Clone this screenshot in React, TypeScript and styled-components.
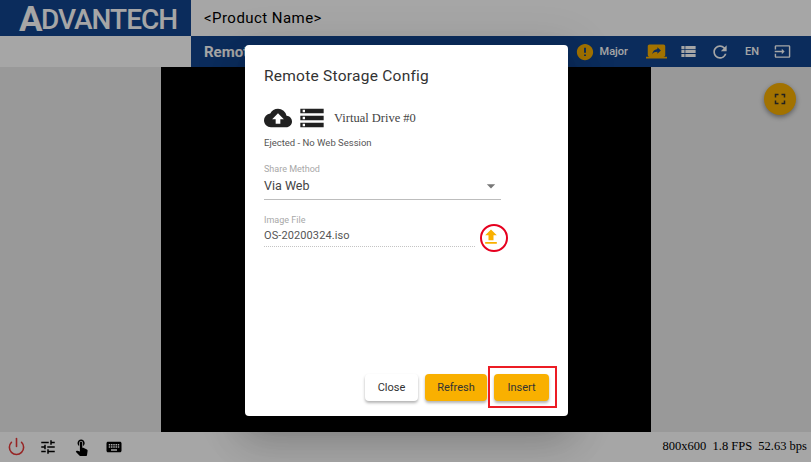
import React from "react";
import styled, { createGlobalStyle } from "styled-components";
import {
  MdCloudUpload, MdStorage, MdArrowDropDown, MdFileUpload, MdTune, MdTouchApp, MdKeyboard,
  MdScreenShare, MdViewList, MdRefresh, MdInput, MdFullscreen,
} from "react-icons/md";
import { FiPower } from "react-icons/fi";
import { IoMdAlert } from "react-icons/io";

const Global = createGlobalStyle`
  html, body { margin: 0; padding: 0; overflow: hidden; }
  body { font-family: Roboto, "Liberation Sans", sans-serif; }
`;

const Page = styled.div`
  position: relative;
  width: 811px;
  height: 462px;
  overflow: hidden;
  display: grid;
  grid-template-rows: 36px 31px 1fr 30px;
  grid-template-columns: 191px 1fr;
  background: #fff;
`;

const LogoBlock = styled.div`
  background: #11448e;
  display: flex;
  align-items: flex-end;
  justify-content: flex-start;
  padding: 0 0 3px 19px;
  box-sizing: border-box;
  color: #fff;
  font-family: Roboto, "Liberation Sans", sans-serif;
  font-weight: 500;
  font-size: 28px;
  line-height: 26px;
  letter-spacing: -1px;
  white-space: nowrap;
`;

const LogoCap = styled.span`
  font-size: 35px;
  font-weight: 700;
  line-height: 26px;
  letter-spacing: -1.5px;
`;

const ProductBar = styled.div`
  display: flex;
  align-items: center;
  padding-left: 13px;
  font-size: 15px;
  color: #000;
  font-family: Roboto, sans-serif;
  letter-spacing: 0.45px;
`;

const LeftGap = styled.div`
  background: #fff;
`;

const NavBar = styled.div`
  background: #11448e;
  display: flex;
  align-items: center;
  color: #fff;
  padding: 0 20px 0 13px;
`;

const NavTitle = styled.div`
  font-size: 15px;
  font-weight: 700;
  flex: 1;
`;

const Status = styled.div`
  display: flex;
  align-items: center;
  gap: 5px;
  font-size: 11px;
  font-weight: 500;
  margin-right: 18px;
  color: #fff;
`;

const NavIcon = styled.span<{ $gap: number; $color?: string; $size: number }>`
  display: flex;
  font-size: ${(p) => p.$size}px;
  margin-right: ${(p) => p.$gap}px;
  color: ${(p) => p.$color || "#fff"};
`;

const Lang = styled.span`
  font-size: 11px;
  font-weight: 500;
  margin-right: 15px;
`;

const Workspace = styled.div`
  grid-column: 1 / 3;
  background: #ebebeb;
  display: flex;
  justify-content: center;
`;

const Screen = styled.div`
  width: 490px;
  background: #000;
`;

const Fab = styled.div`
  position: absolute;
  left: 764px;
  top: 83px;
  width: 32px;
  height: 32px;
  border-radius: 50%;
  background: #f9b000;
  display: flex;
  align-items: center;
  justify-content: center;
  font-size: 18px;
  color: #333;
  box-shadow: 0 2px 5px rgba(0, 0, 0, 0.4);
`;

const BottomBar = styled.div`
  grid-column: 1 / 3;
  background: #fff;
  display: flex;
  align-items: center;
  padding: 0 4px 1px 7px;
  box-sizing: border-box;
`;

const ToolIcon = styled.span<{ $color?: string; $gap: number; $size: number }>`
  display: flex;
  font-size: ${(p) => p.$size}px;
  color: ${(p) => p.$color || "#000"};
  margin-right: ${(p) => p.$gap}px;
`;

const Stats = styled.div`
  margin-left: auto;
  font-family: "Liberation Serif", "Times New Roman", serif;
  font-size: 12.5px;
  color: #000;
  white-space: pre;
`;

const Scrim = styled.div`
  position: absolute;
  inset: 0;
  background: rgba(0, 0, 0, 0.35);
`;

const Dialog = styled.div`
  position: absolute;
  left: 245px;
  top: 45px;
  width: 323px;
  height: 371px;
  box-sizing: border-box;
  padding: 22px 19px 15px;
  background: #fff;
  border-radius: 4px;
  display: flex;
  flex-direction: column;
  box-shadow: 0 11px 15px -7px rgba(0, 0, 0, 0.2), 0 24px 38px 3px rgba(0, 0, 0, 0.14), 0 9px 46px 8px rgba(0, 0, 0, 0.12);
`;

const Title = styled.h2`
  margin: 0;
  font-size: 15.5px;
  line-height: 18px;
  font-weight: 400;
  color: #333;
  letter-spacing: 0.25px;
`;

const DriveRow = styled.div`
  display: flex;
  align-items: center;
  margin-top: 19px;
  height: 28px;
  color: #212121;
`;

const DriveIcon = styled.span<{ $gap: number }>`
  display: flex;
  margin-right: ${(p) => p.$gap}px;
`;

const DriveName = styled.span`
  font-family: "Liberation Serif", "Times New Roman", serif;
  font-size: 12.5px;
  color: #444;
`;

const StateText = styled.div`
  margin-top: 5px;
  font-size: 9.5px;
  line-height: 12px;
  color: #555;
`;

const Field = styled.div<{ $top: number }>`
  margin-top: ${(p) => p.$top}px;
`;

const FieldLabel = styled.div`
  font-size: 9px;
  line-height: 11px;
  color: #a8a8a8;
`;

const SelectBox = styled.div`
  width: 237px;
  height: 25px;
  box-sizing: border-box;
  display: flex;
  align-items: center;
  justify-content: space-between;
  border-bottom: 1px solid #bdbdbd;
  font-size: 12.5px;
  color: #444;
  padding-bottom: 3px;
`;

const FileRow = styled.div`
  display: flex;
  align-items: center;
  width: 240px;
`;

const FileValue = styled.div`
  width: 211px;
  height: 21px;
  box-sizing: border-box;
  font-size: 11px;
  line-height: 19px;
  color: #555;
  border-bottom: 1px dotted #c4c4c4;
  letter-spacing: 0.1px;
`;

const UploadIcon = styled.span`
  display: flex;
  font-size: 20px;
  color: #f9b000;
  margin-left: 6px;
`;

const Actions = styled.div`
  margin-top: auto;
  display: flex;
  justify-content: flex-end;
  gap: 7px;
`;

const ActionButton = styled.button<{ $primary?: boolean; $w: number }>`
  width: ${(p) => p.$w}px;
  height: 27px;
  padding: 0;
  border: 0;
  border-radius: 4px;
  font-family: Roboto, sans-serif;
  font-size: 11px;
  font-weight: 400;
  color: #333;
  background: ${(p) => (p.$primary ? "#f9b000" : "#fff")};
  box-shadow: 0 2px 3px rgba(0, 0, 0, 0.3);
`;

const RedEllipse = styled.div`
  position: absolute;
  left: 480px;
  top: 224px;
  width: 28px;
  height: 28px;
  box-sizing: border-box;
  border: 2px solid #e6001f;
  border-radius: 50%;
`;

const RedBox = styled.div`
  position: absolute;
  left: 488px;
  top: 366px;
  width: 69px;
  height: 42px;
  box-sizing: border-box;
  border: 2px solid #ec1c24;
`;

export default function App() {
  return (
    <Page>
      <Global />
      <LogoBlock>
        <LogoCap>A</LogoCap>DVANTECH
      </LogoBlock>
      <ProductBar>&lt;Product Name&gt;</ProductBar>
      <LeftGap />
      <NavBar>
        <NavTitle>Remote Storage</NavTitle>
        <Status>
          <NavIcon $gap={0} $size={20} $color="#f9b000"><IoMdAlert /></NavIcon>
          Major
        </Status>
        <NavIcon $gap={12} $size={21} $color="#f9b000"><MdScreenShare /></NavIcon>
        <NavIcon $gap={12} $size={19}><MdViewList /></NavIcon>
        <NavIcon $gap={15} $size={20}><MdRefresh /></NavIcon>
        <Lang>EN</Lang>
        <NavIcon $gap={0} $size={17}><MdInput /></NavIcon>
      </NavBar>
      <Workspace>
        <Screen />
      </Workspace>
      <BottomBar>
        <ToolIcon $size={19} $color="#e83a3a" $gap={13}><FiPower /></ToolIcon>
        <ToolIcon $size={18} $gap={15}><MdTune /></ToolIcon>
        <ToolIcon $size={19} $gap={14}><MdTouchApp /></ToolIcon>
        <ToolIcon $size={18} $gap={0}><MdKeyboard /></ToolIcon>
        <Stats>800x600  1.8 FPS  52.63 bps</Stats>
      </BottomBar>
      <Fab><MdFullscreen /></Fab>
      <Scrim />
      <Dialog>
        <Title>Remote Storage Config</Title>
        <DriveRow>
          <DriveIcon $gap={6}><MdCloudUpload size={28} /></DriveIcon>
          <DriveIcon $gap={8}><MdStorage size={28} /></DriveIcon>
          <DriveName>Virtual Drive #0</DriveName>
        </DriveRow>
        <StateText>Ejected - No Web Session</StateText>
        <Field $top={15}>
          <FieldLabel>Share Method</FieldLabel>
          <SelectBox>
            Via Web
            <MdArrowDropDown size={20} color="#777" />
          </SelectBox>
        </Field>
        <Field $top={15}>
          <FieldLabel>Image File</FieldLabel>
          <FileRow>
            <FileValue>OS-20200324.iso</FileValue>
            <UploadIcon><MdFileUpload /></UploadIcon>
          </FileRow>
        </Field>
        <Actions>
          <ActionButton $w={53}>Close</ActionButton>
          <ActionButton $w={62} $primary>Refresh</ActionButton>
          <ActionButton $w={55} $primary>Insert</ActionButton>
        </Actions>
      </Dialog>
      <RedEllipse />
      <RedBox />
    </Page>
  );
}
